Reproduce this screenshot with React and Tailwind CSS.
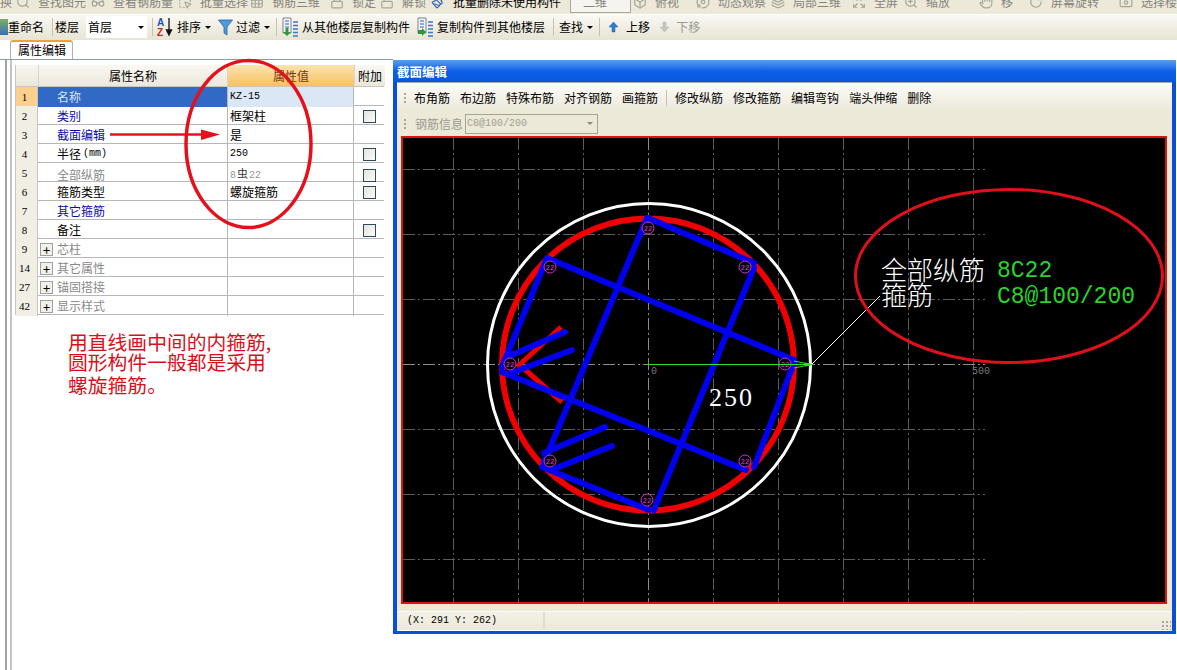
import {
  Box, Camera, Expand, Glasses, Grid3x3, Hand, Layers, Lock, MousePointerSquareDashed, Orbit, Paintbrush, RotateCw, Search, Unlock, ZoomIn,
} from 'lucide-react';

const CJK = "font-['Noto_Sans_CJK_SC',sans-serif]";
const MONO = "font-['Liberation_Mono','Noto_Sans_CJK_SC',monospace]";

const topItems = [
  { label: '查找图元', icon: Search, width: 'w-[75px]' },
  { label: '查看钢筋量', icon: Glasses, width: 'w-[87px]' },
  { label: '批量选择', icon: MousePointerSquareDashed, width: 'w-[72px]' },
  { label: '钢筋三维', icon: Grid3x3, width: 'w-[80px]' },
  { label: '锁定', icon: Lock, width: 'w-[50px]' },
  { label: '解锁', icon: Unlock, width: 'w-[51px]' },
  { label: '批量删除未使用构件', icon: Paintbrush, width: 'w-[139px]', active: true },
];

const topItemsRight = [
  { label: '俯视', icon: Box, width: 'w-[63px]' },
  { label: '动态观察', icon: Orbit, width: 'w-[75px]' },
  { label: '局部三维', icon: Layers, width: 'w-[81px]' },
  { label: '全屏', icon: Expand, width: 'w-[52px]' },
  { label: '缩放', icon: ZoomIn, width: 'w-[75px]' },
  { label: '移', icon: Hand, width: 'w-[50px]' },
  { label: '屏幕旋转', icon: RotateCw, width: 'w-[90px]' },
  { label: '选择楼层', icon: Camera, width: 'w-[80px]' },
];

const rows = [
  { no: 1, name: '名称', value: 'KZ-15', mono: true, selected: true },
  { no: 2, name: '类别', value: '框架柱', blue: true, check: true },
  { no: 3, name: '截面编辑', value: '是', blue: true },
  { no: 4, name: '半径', unit: '(mm)', value: '250', mono: true, check: true },
  { no: 5, name: '全部纵筋', value: 'bar', gray: true, check: true },
  { no: 6, name: '箍筋类型', value: '螺旋箍筋', check: true },
  { no: 7, name: '其它箍筋', blue: true },
  { no: 8, name: '备注', check: true },
  { no: 9, name: '芯柱', group: true },
  { no: 14, name: '其它属性', group: true },
  { no: 27, name: '锚固搭接', group: true },
  { no: 42, name: '显示样式', group: true },
];

const sectionTools = ['布角筋', '布边筋', '特殊布筋', '对齐钢筋', '画箍筋'];
const sectionTools2 = ['修改纵筋', '修改箍筋', '编辑弯钩', '端头伸缩', '删除'];

const rebars = [
  [649, 228], [746, 267], [786, 364], [746, 461], [648, 500], [551, 461], [511, 364], [551, 267],
];

// blue stirrup segments, page coordinates
const stirrups = [
  [649, 218, 755, 263], [755, 268, 655, 510], [648, 218, 545, 462],
  [548, 258, 795, 360], [503, 372, 747, 470], [548, 258, 503, 367],
  [543, 467, 650, 510], [795, 363, 755, 467], [508, 357, 566, 332],
  [512, 373, 573, 350], [545, 453, 606, 427], [552, 470, 613, 446],
];

const gridX = [454.5, 519.5, 584.5, 714.5, 779.5, 844.5, 909.5, 974.5];
const gridY = [169.5, 234.5, 299.5, 429.5, 494.5, 559.5];

const Caret = ({ color = 'border-t-black' }) => (
  <span className={`inline-block w-0 h-0 border-x-[3px] border-x-transparent border-t-[3px] ${color}`} />
);

const Sep = ({ className = '' }) => <span className={`w-px h-[18px] bg-[#c5c2b0] ${className}`} />;

const SortIcon = () => (
  <svg width="16" height="20" viewBox="0 0 16 20">
    <text x="0" y="9" fontSize="10" fontWeight="700" fill="#2050c0" fontFamily="Liberation Sans">A</text>
    <text x="0" y="19" fontSize="10" fontWeight="700" fill="#c03020" fontFamily="Liberation Sans">Z</text>
    <path d="M12 1v15M9.500 13l2.500 5 2.500-5z" stroke="#111" strokeWidth="1.300" fill="#111" />
  </svg>
);

const FilterIcon = () => (
  <svg width="15" height="17" viewBox="0 0 15 17">
    <path d="M0.500 1h14L9 8v8l-3-2V8z" fill="#4f9be0" stroke="#2b5f9f" strokeWidth="0.800" />
  </svg>
);

const CopyIcon = ({ flip }) => (
  <svg width="17" height="20" viewBox="0 0 17 20">
    <path d="M1 1h8v15H1z" fill="#f4f4f4" stroke="#667" strokeWidth="0.800" />
    <path d="M3 4h4M3 7h4M3 10h4" stroke="#2d62c0" strokeWidth="1.200" />
    <path d="M11 5h5M11 8.500h5M11 12h5M11 15.500h5M11 19h5" stroke="#3b78c8" strokeWidth="1.500" />
    <path d={flip ? 'M5 11l4 4-4 4v-2H1v-4h4z' : 'M5 19l-4-4h2.500v-4h3v4H9z'} fill="#2f9a35" />
  </svg>
);

const MoveIcon = ({ down }) => (
  <svg width="11" height="12" viewBox="0 0 11 12">
    <path d={down ? 'M4 1h3v5h3l-4.500 5L1 6h3z' : 'M5.500 1L10 6H7v5H4V6H1z'} fill={down ? '#c4c4bc' : '#2f7fd0'} stroke={down ? '#bbb' : '#1b5ca5'} strokeWidth="0.500" />
  </svg>
);

const Grip = () => (
  <span className="flex flex-col gap-[2px] w-[2px]">
    <span className="w-[2px] h-[2px] bg-[#a9a692]" />
    <span className="w-[2px] h-[2px] bg-[#a9a692]" />
    <span className="w-[2px] h-[2px] bg-[#a9a692]" />
  </span>
);

const TopBar = () => (
  <div className="h-[14px] overflow-hidden bg-[#ece9d8] text-[12px] text-[#85847c]">
    <div className="-mt-[4px] h-[12px] flex items-center whitespace-nowrap">
      <span className="w-[16px] shrink-0">换</span>
      {topItems.map((item) => (
        <span key={item.label} className={`${item.width} shrink-0 flex items-center gap-[8px] ${item.active ? 'text-black' : ''}`}>
          <item.icon size={14} className={`shrink-0 ${item.active ? 'text-[#3568b8]' : 'text-[#a5a49a]'}`} />
          {item.label}
        </span>
      ))}
      <span className="w-[61px] h-[22px] shrink-0 flex items-center bg-[#f5f4ee] border border-[#aca899] mr-[2px] pl-[12px]">二维</span>
      {topItemsRight.map((item) => (
        <span key={item.label} className={`${item.width} shrink-0 flex items-center gap-[8px]`}>
          <item.icon size={14} className="shrink-0 text-[#a5a49a]" />
          {item.label}
        </span>
      ))}
    </div>
  </div>
);

const MainBar = () => (
  <div className="h-[25px] mt-px pb-[1px] flex items-center bg-gradient-to-b from-[#f9f8f3] to-[#e7e4d4] text-[12px] text-black whitespace-nowrap overflow-hidden">
    <span className="w-[8px] h-[16px] bg-gradient-to-b from-[#7fae5a] to-[#3a6db5]" />
    <span>重命名</span>
    <Sep className="ml-[8px]" />
    <span className="ml-[2px]">楼层</span>
    <span className="ml-[7px] w-[61px] h-[22px] bg-white flex items-center justify-between pl-[2px] pr-[3px]">
      首层
      <Caret />
    </span>
    <Sep className="ml-[5px]" />
    <span className="ml-[4px] flex"><SortIcon /></span>
    <span className="ml-[4px]">排序</span>
    <span className="ml-[4px] flex"><Caret /></span>
    <span className="ml-[7px] flex"><FilterIcon /></span>
    <span className="ml-[3px]">过滤</span>
    <span className="ml-[4px] flex"><Caret /></span>
    <Sep className="ml-[6px]" />
    <span className="ml-[5px] flex"><CopyIcon /></span>
    <span className="ml-[3px]">从其他楼层复制构件</span>
    <span className="ml-[7px] flex"><CopyIcon flip /></span>
    <span className="ml-[3px]">复制构件到其他楼层</span>
    <Sep className="ml-[8px]" />
    <span className="ml-[5px]">查找</span>
    <span className="ml-[4px] flex"><Caret /></span>
    <Sep className="ml-[6px]" />
    <span className="ml-[8px] flex"><MoveIcon /></span>
    <span className="ml-[7px]">上移</span>
    <span className="ml-[9px] flex"><MoveIcon down /></span>
    <span className="ml-[6px] text-[#9b9a92]">下移</span>
  </div>
);

const Check = () => (
  <span className="block mt-[1px] w-[13px] h-[13px] border border-[#2f4a60] bg-gradient-to-br from-[#e4e4dc] to-[#fbfbf8]" />
);

const PropertyRow = ({ row }) => {
  const nameColor = row.selected ? 'text-[#d8e4f6]' : row.blue ? 'text-[#0b0ba8]' : row.gray || row.group ? 'text-[#8a8a8a]' : 'text-black';
  return (
    <div className="grid grid-cols-[22px_190px_126px_31px] h-[19px] border-b border-[#b7b7b7] text-[12px] leading-[20px]">
      <span className={`pr-[4px] text-center border-r border-[#c9c7bb] font-['Liberation_Serif',serif] text-[11px] ${row.selected ? 'bg-[#fbcf8c]' : 'bg-[#f1efe4]'}`}>
        {row.no}
      </span>
      <span className={`flex items-center border-r border-[#b7b7b7] ${nameColor} ${row.selected ? 'bg-[#316ac5]' : ''} ${row.group ? 'pl-[2px]' : 'pl-[19px]'}`}>
        {row.group && (
          <span className="w-[13px] h-[13px] mr-[4px] border border-[#a0a0a0] bg-[#f1f1ea] text-black text-[13px] leading-[11px] text-center">+</span>
        )}
        {row.name}
        {row.unit && <span className={`${MONO} text-[10px] ml-[2px]`}>{row.unit}</span>}
      </span>
      <span className={`pl-[2px] border-r border-[#b7b7b7] ${row.selected ? 'bg-[#dce7f5]' : ''} ${row.mono ? `${MONO} text-[10px]` : ''}`}>
        {row.value === 'bar' ? (
          <span className={`${MONO} text-[10px] text-[#999]`}>8<span className="text-[#333] text-[11px] mx-[1px]">虫</span>22</span>
        ) : row.value}
      </span>
      <span className="flex items-center justify-center">{row.check && <Check />}</span>
    </div>
  );
};

const PropertyPanel = () => (
  <div className="w-[393px] shrink-0 flex flex-col">
    <div className="h-[19px] pl-[10px] flex items-end">
      <span className="h-[19px] w-[63px] bg-white border border-b-0 border-[#a5b1bd] border-t-2 border-t-[#e8a33c] rounded-t-[3px] text-[12px] pl-[7px] leading-[16px]">属性编辑</span>
    </div>
    <div className="flex-1 flex border-t border-[#8c9bac]">
      <span className="w-[5px]" />
      <span className="w-[2px] bg-[#a3a3a3]" />
      <span className="w-[3px]" />
      <span className="w-[2px] bg-[#c4c4c4]" />
      <div className="ml-[3px] mt-[5px]">
        <div className="w-[369px] border-l border-[#c9c7bb]">
          <div className="grid grid-cols-[22px_190px_126px_31px] h-[22px] text-[12px] leading-[21px] text-center border-b border-[#c9c7bb]">
            <span className="bg-gradient-to-b from-[#f7f6f0] to-[#ebe8da]" />
            <span className="bg-gradient-to-b from-[#f9f8f3] to-[#ebe8da] border-x border-[#d8d6c8]">属性名称</span>
            <span className="bg-gradient-to-b from-[#fce3b0] to-[#f6c160] text-[#7a3a10]">属性值</span>
            <span className="bg-gradient-to-b from-[#f9f8f3] to-[#ebe8da] border-l border-[#d8d6c8]">附加</span>
          </div>
          {rows.map((row) => <PropertyRow key={row.no} row={row} />)}
        </div>
        <div className="mt-[17px] ml-[53px] text-[19.8px] leading-[20px] text-[#d8101c] whitespace-nowrap">
          <p>用直线画中间的内箍筋,</p>
          <p>圆形构件一般都是采用</p>
          <p className="mt-[3px]">螺旋箍筋。</p>
        </div>
      </div>
    </div>
  </div>
);

const SectionCanvas = () => (
  <div className="ml-[4px] w-[766px] h-[468px] border-2 border-[#dc1414] bg-black shrink-0">
    <svg className="block w-full h-full" viewBox="404 138 762 464">
      {gridX.map((x) => <line key={x} x1={x} y1="138" x2={x} y2="602" stroke="#5c5c5c" strokeDasharray="12 3 2 3" />)}
      {gridY.map((y) => <line key={y} x1="404" y1={y} x2="986" y2={y} stroke="#5c5c5c" strokeDasharray="12 3 2 3" />)}
      <line x1="649.500" y1="138" x2="649.500" y2="602" stroke="#8c8c8c" strokeDasharray="12 3 2 3" />
      <line x1="404" y1="364.500" x2="986" y2="364.500" stroke="#8c8c8c" strokeDasharray="12 3 2 3" />

      <circle cx="650" cy="365" r="161.500" fill="none" stroke="#fff" strokeWidth="3" />
      <circle cx="649" cy="364.500" r="146" fill="none" stroke="#f00000" strokeWidth="6" />
      <path d="M518 367L562 327M523 367L563 402" stroke="#f00000" strokeWidth="5" fill="none" />

      {stirrups.map(([x1, y1, x2, y2]) => (
        <line key={`${x1}-${y1}-${x2}`} x1={x1} y1={y1} x2={x2} y2={y2} stroke="#0000f0" strokeWidth="6" strokeLinecap="round" />
      ))}

      {rebars.map(([x, y]) => (
        <g key={`${x}-${y}`}>
          <circle cx={x} cy={y} r="6" fill="#000" stroke="#d030d0" />
          <text x={x} y={y + 2.500} textAnchor="middle" fontSize="7" fill="#e040e0" fontFamily="Liberation Mono">22</text>
        </g>
      ))}

      <line x1="649" y1="364.500" x2="812" y2="364.500" stroke="#30e030" />
      <path d="M795 361L812 364.500L795 368" fill="none" stroke="#30e030" />
      <path d="M806 363L813 364.500L806 366z" fill="#30e030" stroke="#30e030" />
      <line x1="813" y1="364" x2="881" y2="296" stroke="#fff" />

      <text x="652" y="374" fontSize="10" fill="#777" fontFamily="Liberation Mono">0</text>
      <text x="973" y="374" fontSize="10" fill="#777" fontFamily="Liberation Mono">500</text>
      <text x="710" y="406" fontSize="26" fill="#fff" letterSpacing="2" fontFamily="Liberation Serif">250</text>

      <text x="882" y="280" fontSize="26" fill="#fff" fontFamily="Noto Sans CJK SC" fontWeight="300">全部纵筋</text>
      <text x="882" y="305" fontSize="26" fill="#fff" fontFamily="Noto Sans CJK SC" fontWeight="300">箍筋</text>
      <text x="998" y="277" fontSize="23" fill="#28d428" fontFamily="Liberation Mono">8C22</text>
      <text x="998" y="303" fontSize="23" fill="#28d428" fontFamily="Liberation Mono">C8@100/200</text>
    </svg>
  </div>
);

const SectionWindow = () => (
  <div className="mt-[20px] w-[783px] h-[574px] shrink-0 bg-[#0a4fd6] flex flex-col">
    <div className="h-[22px] px-[4px] pt-[2px] flex items-center bg-gradient-to-b from-[#5b9ded] via-[#0a5fe8] to-[#0a58dc] text-white text-[12.5px] font-bold">
      截面编辑
    </div>
    <div className="ml-[4px] mr-[4px] h-[549px] bg-[#ece9d8] border-t border-[#a8a8a0] flex flex-col">
      <div className="h-[2px] bg-white" />
      <div className="h-[26px] flex items-center pl-[7px] bg-gradient-to-b from-[#fbfaf6] to-[#ece9da] text-[12px] text-black whitespace-nowrap">
        <Grip />
        <span className="flex ml-[8px] gap-[10px]">
          {sectionTools.map((t) => <span key={t}>{t}</span>)}
        </span>
        <span className="w-px h-[16px] bg-[#c5c2b0] mx-[8px]" />
        <span className="flex gap-[10px]">
          {sectionTools2.map((t) => <span key={t}>{t}</span>)}
        </span>
      </div>
      <div className="h-[25px] flex items-center pl-[7px] text-[12px] text-[#9a998e] whitespace-nowrap">
        <Grip />
        <span className="ml-[9px]">钢筋信息</span>
        <span className={`ml-[2px] w-[133px] h-[20px] border border-[#a6a593] flex items-center justify-between pl-[1px] pr-[4px] ${MONO} text-[10px] text-[#a09f94]`}>
          C8@100/200
          <Caret color="border-t-[#8a8a80]" />
        </span>
      </div>
      <SectionCanvas />
      <div className="flex-1" />
      <div className="h-[19px] flex items-center bg-gradient-to-b from-[#f3f1e6] to-[#ece9d8] border-t border-[#fbfaf4] shrink-0">
        <span className={`w-[148px] h-full pl-[10px] border-r-2 border-[#dedccd] ${MONO} text-[10px] leading-[18px] text-black`}>(X: 291 Y: 262)</span>
        <span className="flex-1" />
        <span className="w-[10px] h-[10px] mt-[8px] mr-px bg-[radial-gradient(#a9a692_1px,transparent_1px)] bg-[length:4px_4px]" />
      </div>
      <div className="h-px bg-white" />
    </div>
  </div>
);

// red marks drawn on top of the whole screenshot
const Annotations = () => (
  <svg className="absolute inset-0 pointer-events-none" width="1177" height="670" viewBox="0 0 1177 670">
    <ellipse cx="248.500" cy="144" rx="62.500" ry="83.500" fill="none" stroke="#e4101c" strokeWidth="3.500" />
    <line x1="110" y1="134.500" x2="205" y2="134.500" stroke="#e4101c" strokeWidth="2.500" />
    <path d="M201 129.500L220 134.500L201 140z" fill="#e4101c" />
    <ellipse cx="1009" cy="276" rx="153.500" ry="86.500" fill="none" stroke="#e0101a" strokeWidth="3" />
  </svg>
);

const App = () => (
  <div className={`relative w-[1177px] h-[670px] overflow-hidden bg-white flex flex-col ${CJK}`}>
    <TopBar />
    <MainBar />
    <div className="flex-1 flex min-h-0">
      <PropertyPanel />
      <SectionWindow />
    </div>
    <Annotations />
  </div>
);

export default App;
